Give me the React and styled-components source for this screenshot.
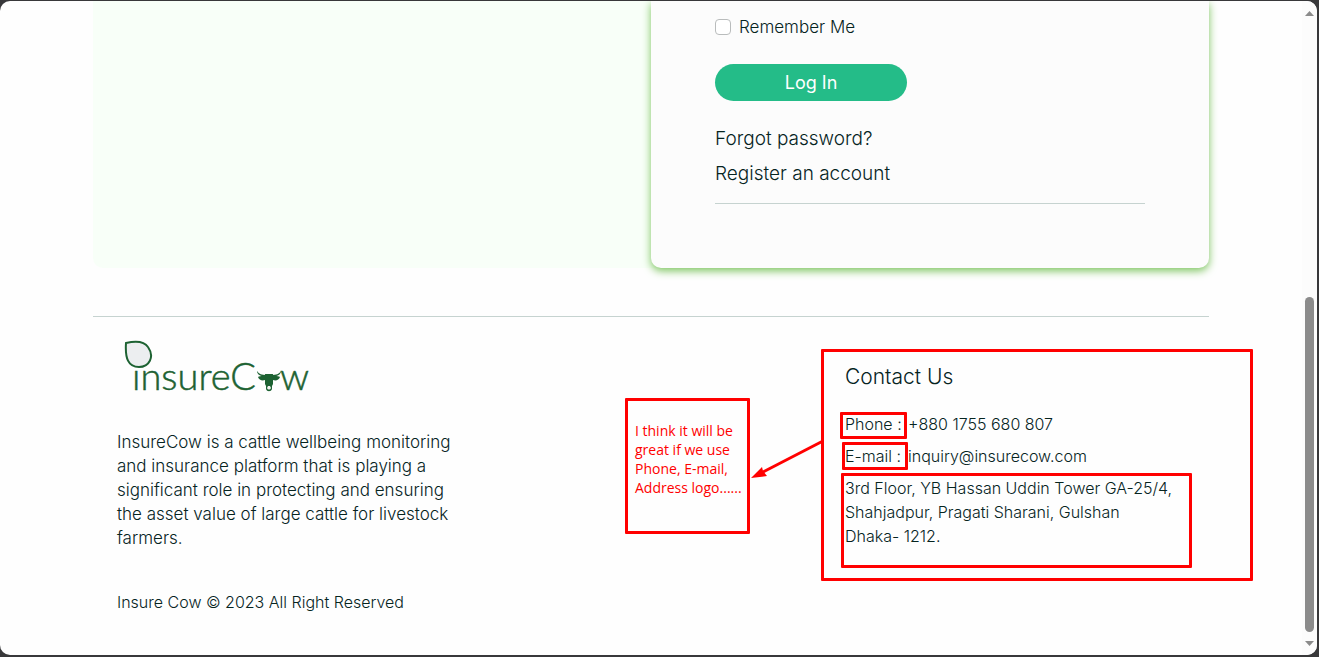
import React from "react";
import styled, { createGlobalStyle } from "styled-components";

const GlobalStyle = createGlobalStyle`
  *, *::before, *::after { box-sizing: border-box; }
  body {
    margin: 0;
    background: #38383a;
    color: #06241f;
    font: 300 16px/24px Inter, "Open Sans", sans-serif;
  }
  h2, p, address { margin: 0; font-style: normal; font-weight: inherit; }
`;

const Frame = styled.div`
  display: grid;
  grid-template-columns: minmax(0, 1fr) 15px;
  margin: 1px 2px 2px 0;
  background: #fefefe;
  border-radius: 10px;
  overflow: hidden;
`;

const Page = styled.div`
  padding: 0 24px 41px;
`;

const Container = styled.div`
  max-width: 1116px;
  margin: 0 auto;
`;

const Login = styled.section`
  display: grid;
  grid-template-columns: 1fr 1fr;
  background: #f8fff8;
  border-radius: 0 0 10px 10px;
`;

const Card = styled.form`
  grid-column: 2;
  display: flex;
  flex-direction: column;
  align-items: flex-start;
  padding: 14px 64px 64px;
  background: #fcfcfc;
  border-radius: 0 0 10px 10px;
  box-shadow: 0 3px 8px #7cc45e;
`;

const Remember = styled.label`
  display: flex;
  align-items: center;
  gap: 8px;
  font-size: 17px;
`;

const Checkbox = styled.input`
  appearance: none;
  width: 16px;
  height: 16px;
  margin: 0;
  background: #fff;
  border: 1px solid #b9bcbc;
  border-radius: 4px;
`;

const Button = styled.button`
  width: 192px;
  height: 37px;
  margin: 25px 0 20px;
  border: 0;
  border-radius: 19px;
  background: #24bc88;
  color: #fff;
  font: 400 18px/24px Inter, "Open Sans", sans-serif;
`;

const CardLink = styled.a`
  color: inherit;
  font-size: 19px;
  line-height: 35px;
  text-decoration: none;
`;

const Rule = styled.hr`
  align-self: stretch;
  margin: ${({ $gap }) => $gap}px 0 0;
  border: 0;
  border-top: 1px solid #c6d3d0;
`;

const Footer = styled.footer`
  display: grid;
  grid-template-columns: minmax(0, 1fr) 364px;
  padding-left: 24px;
`;

const About = styled.div`
  padding-top: 22px;
`;

const LogoArt = styled.svg`
  display: block;
  width: 200px;
  height: 64px;
  margin-bottom: 27px;
`;

const LogoText = styled.text`
  font: 300 38px Lato, sans-serif;
  fill: #1d6232;
  stroke: #1d6232;
  stroke-width: 0.5;
`;

const Blurb = styled.p`
  margin-bottom: 40px;
  font-size: 17px;
`;

const Contact = styled.div`
  position: relative;
  display: flex;
  flex-direction: column;
  gap: 8px;
  padding-top: 48px;
`;

const Title = styled.h2`
  margin: 0 0 15px;
  font-size: 21px;
  line-height: 24px;
`;

const ContactLine = styled.p`
  display: flex;
  gap: 4px;
`;

const ContactLabel = styled.span`
  min-width: 59px;
`;

const ContactLink = styled.a`
  color: inherit;
  text-decoration: none;
`;

const Mark = styled.div`
  position: absolute;
  top: ${({ $top }) => $top}px;
  left: ${({ $left }) => $left}px;
  width: ${({ $width }) => $width}px;
  height: ${({ $height }) => $height}px;
  border: 3px solid #f00;
  border-radius: 1px;
  pointer-events: none;
`;

const Note = styled(Mark)`
  padding: 20px 0 0 7px;
  color: #f00;
  font: 400 14px/19px "Open Sans", sans-serif;
  white-space: nowrap;
`;

const Arrow = styled.svg`
  position: absolute;
  top: 120px;
  left: -96px;
  width: 76px;
  height: 44px;
`;

const Scrollbar = styled.div`
  display: flex;
  flex-direction: column;
  align-items: center;
  justify-content: space-between;
  padding: 10px 0 9px;
  background: #fcfcfc;
`;

const Thumb = styled.div`
  width: 9px;
  height: 335px;
  margin: auto 0 9px;
  border-radius: 5px;
  background: #8b8b8b;
`;

const Logo = () => (
  <LogoArt viewBox="0 0 200 64" role="img" aria-label="insureCow">
    <LogoText x="15" y="51">insureC</LogoText>
    <LogoText x="163" y="51">w</LogoText>
    <path d="M9 4C18 2 27 2 31 8c7 10 1 20-9 20C11 28 8 19 9 4Z" fill="#eceef0" stroke="#1d6232" strokeWidth="2" />
    <g fill="#1d6232">
      <path d="M140 32c2 3 5 4 9 4l2-1h2l2 1c4 0 7-1 9-4 0 3-3 5-6 5 2 0 4 0 5 1-1 3-4 4-7 3v4l-2 4c0 2-1 3-2 3s-2-1-2-3l-2-4v-4c-3 1-6 0-7-3 1-1 3-1 5-1-3 0-6-2-6-5Z" />
      <path d="M148 35h8l-1 11v4c-1 3-5 3-6 0v-4Z" />
      <path d="M151 47h2l1 2c-1 2-3 2-4 0Z" fill="#f1f3f1" />
    </g>
  </LogoArt>
);

const Triangle = ({ up }) => (
  <svg width="9" height="5" viewBox="0 0 9 5" aria-hidden="true">
    <path d={up ? "M0 5L4.5 0L9 5Z" : "M0 0L4.5 5L9 0Z"} fill="#8b8b8b" />
  </svg>
);

export default function App() {
  return (
    <>
      <GlobalStyle />
      <Frame>
        <Page>
          <Container>
            <Login>
              <Card onSubmit={(e) => e.preventDefault()}>
                <Remember>
                  <Checkbox type="checkbox" />
                  Remember Me
                </Remember>
                <Button type="submit">Log In</Button>
                <CardLink href="#forgot">Forgot password?</CardLink>
                <CardLink href="#register">Register an account</CardLink>
                <Rule $gap={12} />
              </Card>
            </Login>
            <Rule $gap={48} />
            <Footer>
              <About>
                <Logo />
                <Blurb>
                  InsureCow is a cattle wellbeing monitoring
                  <br />
                  and insurance platform that is playing a
                  <br />
                  significant role in protecting and ensuring
                  <br />
                  the asset value of large cattle for livestock
                  <br />
                  farmers.
                </Blurb>
                <p>Insure Cow © 2023 All Right Reserved</p>
              </About>
              <Contact>
                <Title>Contact Us</Title>
                <ContactLine>
                  <ContactLabel>Phone :</ContactLabel>
                  <ContactLink href="tel:+8801755680807">+880 1755 680 807</ContactLink>
                </ContactLine>
                <ContactLine>
                  <ContactLabel>E-mail :</ContactLabel>
                  <ContactLink href="mailto:inquiry@insurecow.com">inquiry@insurecow.com</ContactLink>
                </ContactLine>
                <address>
                  3rd Floor, YB Hassan Uddin Tower GA-25/4,
                  <br />
                  Shahjadpur, Pragati Sharani, Gulshan
                  <br />
                  Dhaka- 1212.
                </address>
                <Mark $top={32} $left={-24} $width={432} $height={232} />
                <Mark $top={95} $left={-5} $width={67} $height={27} />
                <Mark $top={125} $left={-3} $width={66} $height={28} />
                <Mark $top={156} $left={-4} $width={351} $height={95} />
                <Note $top={81} $left={-220} $width={125} $height={136}>
                  I think it will be
                  <br />
                  great if we use
                  <br />
                  Phone, E-mail,
                  <br />
                  Address logo......
                </Note>
                <Arrow viewBox="0 0 76 44" aria-hidden="true">
                  <path d="M74 4L14 35" stroke="#f00" strokeWidth="3" />
                  <path d="M2 41L13 30L14 34L18 39Z" fill="#f00" />
                </Arrow>
              </Contact>
            </Footer>
          </Container>
        </Page>
        <Scrollbar>
          <Triangle up />
          <Thumb />
          <Triangle />
        </Scrollbar>
      </Frame>
    </>
  );
}
